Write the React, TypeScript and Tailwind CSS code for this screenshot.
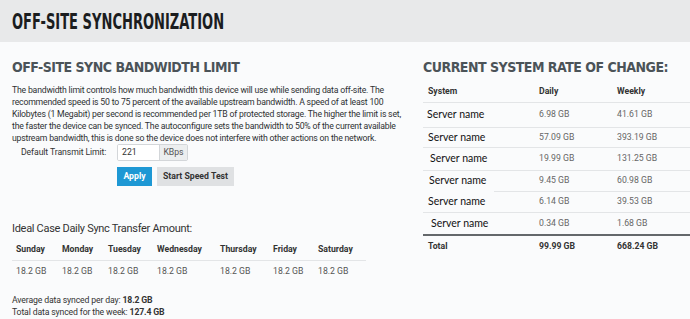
import React from "react";

const body = { fontFamily: 'Roboto, "Liberation Sans", sans-serif' };
const head = { fontFamily: '"DejaVu Sans Condensed", "DejaVu Sans", sans-serif' };
const server = { fontFamily: 'Lato, "Liberation Sans", sans-serif' };

const intro = [
  "The bandwidth limit controls how much bandwidth this device will use while sending data off-site. The",
  "recommended speed is 50 to 75 percent of the available upstream bandwidth. A speed of at least 100",
  "Kilobytes (1 Megabit) per second is recommended per 1TB of protected storage. The higher the limit is set,",
  "the faster the device can be synced. The autoconfigure sets the bandwidth to 50% of the current available",
  "upstream bandwidth, this is done so the device does not interfere with other actions on the network.",
];

const days = [
  { name: "Sunday", w: "w-[46px]" },
  { name: "Monday", w: "w-[46px]" },
  { name: "Tuesday", w: "w-[49px]" },
  { name: "Wednesday", w: "w-[63px]" },
  { name: "Thursday", w: "w-[53px]" },
  { name: "Friday", w: "w-[45px]" },
  { name: "Saturday", w: "w-[48px]" },
];

const systems = [
  { daily: "6.98 GB", weekly: "41.61 GB", h: "h-[25px]", pad: "pl-[4px]" },
  { daily: "57.09 GB", weekly: "393.19 GB", h: "h-[20px]", pad: "pl-[5px]" },
  { daily: "19.99 GB", weekly: "131.25 GB", h: "h-[23px]", pad: "pl-[7px]" },
  { daily: "9.45 GB", weekly: "60.98 GB", h: "h-[21px]", pad: "pl-[6px]" },
  { daily: "6.14 GB", weekly: "39.53 GB", h: "h-[21px]", pad: "pl-[5px]" },
  { daily: "0.34 GB", weekly: "1.68 GB", h: "h-[23px]", pad: "pl-[8px]" },
];

export default function App() {
  return (
    <div className="w-[690px] h-[319px] overflow-hidden bg-[#fafbfc] text-[#333]" style={body}>
      {/* Page header */}
      <div className="h-[42px] bg-[#e8e9ea] flex items-center pl-[12px]">
        <h1
          className="inline-block origin-left scale-x-[0.66] text-[22px] font-bold text-[#1b1d1f] whitespace-nowrap"
          style={head}
        >
          OFF-SITE SYNCHRONIZATION
        </h1>
      </div>

      <div className="flex">
        {/* Left column */}
        <div className="w-[400px] pl-[12px] pt-[15px]">
          <h2
            className="text-[14px] font-bold text-[#4b5358] leading-[20px] tracking-[-0.5px] whitespace-nowrap"
            style={head}
          >
            OFF-SITE SYNC BANDWIDTH LIMIT
          </h2>
          <div className="mt-[7px] text-[8.7px] leading-[12px] tracking-[-0.2px] text-[#2e3133] whitespace-nowrap">
            {intro.map((line) => (
              <div key={line}>{line}</div>
            ))}
          </div>

          <div className="flex items-center">
            <label className="w-[105px] pl-[9px] text-[8.7px] tracking-[-0.1px] text-[#333]">
              Default Transmit Limit:
            </label>
            <div className="flex h-[17px] border border-[#d3d6d9] rounded-[2px] overflow-hidden">
              <div className="w-[41px] bg-white text-[8.7px] pl-[4px] flex items-center">221</div>
              <div className="w-[28px] bg-[#eceeef] border-l border-[#d3d6d9] text-[8.7px] flex items-center justify-center text-[#555]">
                KBps
              </div>
            </div>
          </div>

          <div className="flex gap-[5px] ml-[105px] mt-[6px]">
            <button className="h-[19px] w-[35px] bg-[#1e98d4] text-white text-[8.7px] font-bold">
              Apply
            </button>
            <button className="h-[19px] w-[77px] bg-[#dfe1e3] text-[#333] text-[8.7px] font-bold">
              Start Speed Test
            </button>
          </div>

          <div className="mt-[35px] text-[11px] tracking-[-0.3px] text-[#333] leading-[16px] whitespace-nowrap">
            Ideal Case Daily Sync Transfer Amount:
          </div>

          {/* Daily transfer table */}
          <div className="mt-[2px] w-[354px]">
            <div className="flex h-[22px] items-center border-b border-[#e3e5e7] text-[8.7px] font-bold text-[#333]">
              {days.map((d) => (
                <div key={d.name} className={`${d.w} pl-[4px]`}>
                  {d.name}
                </div>
              ))}
            </div>
            <div className="flex h-[22px] items-center text-[8.7px] text-[#555]">
              {days.map((d) => (
                <div key={d.name} className={`${d.w} pl-[4px]`}>
                  18.2 GB
                </div>
              ))}
            </div>
          </div>

          <div className="mt-[11px] text-[8.7px] tracking-[-0.15px] leading-[12px] text-[#333] whitespace-nowrap">
            <div>
              Average data synced per day: <span className="font-bold">18.2 GB</span>
            </div>
            <div>
              Total data synced for the week: <span className="font-bold">127.4 GB</span>
            </div>
          </div>
        </div>

        {/* Right column */}
        <div className="flex-1 pl-[23px] pt-[15px]">
          <h2
            className="text-[14px] font-bold text-[#4b5358] leading-[20px] tracking-[-0.5px] whitespace-nowrap"
            style={head}
          >
            CURRENT SYSTEM RATE OF CHANGE:
          </h2>
          <div className="mt-[4px]">
            <div className="flex h-[22px] items-center border-b border-[#e3e5e7] text-[8.7px] font-bold text-[#333]">
              <div className="w-[116px] pl-[5px]">System</div>
              <div className="w-[78px]">Daily</div>
              <div>Weekly</div>
            </div>
            {systems.map((s, i) => (
              <div key={i} className={`${s.h} flex flex-col`}>
                <div className="flex-1 flex items-center text-[8.7px] text-[#666]">
                  <div className={`w-[116px] ${s.pad} text-[10.5px] text-[#111]`} style={server}>
                    Server name
                  </div>
                  <div className="w-[78px]">{s.daily}</div>
                  <div>{s.weekly}</div>
                </div>
                {i === 3 ? (
                  <div className="h-px ml-[71px] bg-[#e3e5e7]" />
                ) : i === systems.length - 1 ? (
                  <div className="h-[2px] bg-[#64686b]" />
                ) : (
                  <div className="h-px bg-[#e3e5e7]" />
                )}
              </div>
            ))}
            <div className="flex h-[22px] items-center text-[8.7px] font-bold text-[#333]">
              <div className="w-[116px] pl-[5px]">Total</div>
              <div className="w-[78px]">99.99 GB</div>
              <div>668.24 GB</div>
            </div>
          </div>
        </div>
      </div>
    </div>
  );
}
